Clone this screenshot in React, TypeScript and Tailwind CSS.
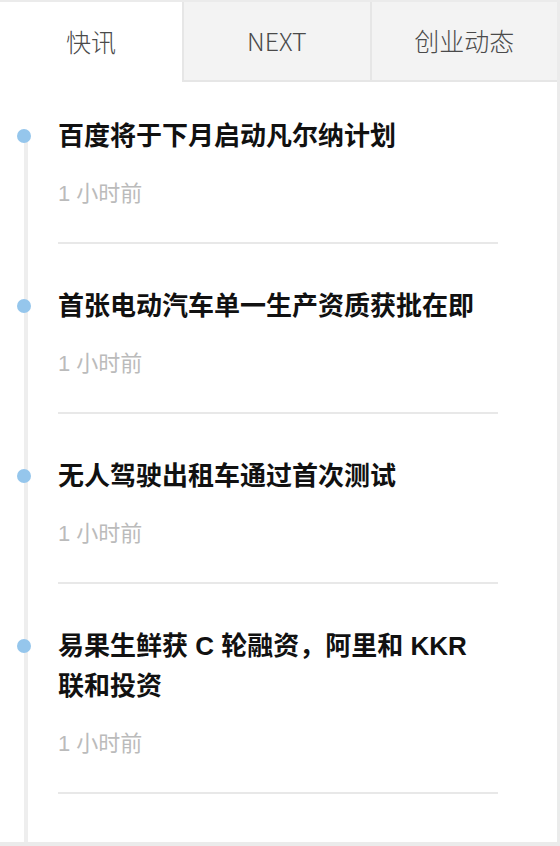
const tabs = ["快讯", "NEXT", "创业动态"];

const news = [
  { title: "百度将于下月启动凡尔纳计划", time: "1 小时前" },
  { title: "首张电动汽车单一生产资质获批在即", time: "1 小时前" },
  { title: "无人驾驶出租车通过首次测试", time: "1 小时前" },
  { title: "易果生鲜获 C 轮融资，阿里和 KKR 联和投资", time: "1 小时前" },
];

export default function App() {
  return (
    <div
      className="min-h-[846px] bg-[#ebebeb] pt-[2px] pr-[3px] pb-[4px]"
      style={{ fontFamily: '"Liberation Sans", "Noto Sans CJK SC", sans-serif' }}
    >
      <div className="bg-white">
        {/* tabs */}
        <div className="flex h-[80px] font-['Noto_Sans_CJK_SC',sans-serif]">
          {tabs.map((t, i) => (
            <div
              key={t}
              className={`flex items-center justify-center text-[25px] font-light text-[#4a4a4a] ${
                i === 0
                  ? "w-[182px] bg-white"
                  : "flex-1 bg-[#f3f3f3] border-l-2 border-b-2 border-[#e6e6e6]"
              }`}
            >
              {t}
            </div>
          ))}
        </div>

        {/* timeline */}
        <div className="relative pl-[58px] pr-[59px] pt-[34px] pb-[48px]">
          <div className="absolute left-[24px] top-[53px] bottom-0 w-[4px] bg-[#eeeeee]" />
          {news.map((n, i) => (
            <div
              key={i}
              className={`relative border-b-2 border-[#e8e8e8] pb-[33px] ${i > 0 ? "mt-[42px]" : ""}`}
            >
              <span className="absolute left-[-41px] top-[13px] h-[14px] w-[14px] rounded-full bg-[#95c6ec]" />
              <div className="text-[26px] font-bold leading-[40px] text-[#111]">{n.title}</div>
              <div className="mt-[23px] text-[22px] leading-[30px] text-[#bbbbbb]">{n.time}</div>
            </div>
          ))}
        </div>
      </div>
    </div>
  );
}
